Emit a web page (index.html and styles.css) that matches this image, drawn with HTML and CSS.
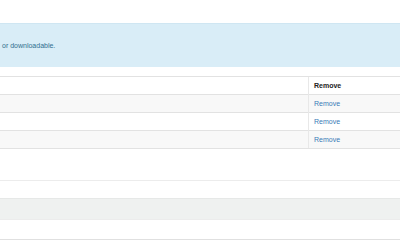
FILE: index.html
```html
<!DOCTYPE html>
<html>
<head>
<meta charset="utf-8">
<link rel="stylesheet" href="styles.css">
</head>
<body>
<div class="page">
  <div class="alert">or downloadable.</div>
  <table class="files">
    <thead>
      <tr><th class="name"></th><th class="act">Remove</th></tr>
    </thead>
    <tbody>
      <tr><td class="name"></td><td class="act"><a href="#">Remove</a></td></tr>
      <tr><td class="name"></td><td class="act"><a href="#">Remove</a></td></tr>
      <tr><td class="name"></td><td class="act"><a href="#">Remove</a></td></tr>
    </tbody>
  </table>
  <div class="list">
    <div class="row first"></div>
    <div class="row shaded"></div>
    <div class="row last"></div>
  </div>
</div>
</body>
</html>
```
FILE: styles.css
```css
html, body {
  margin: 0;
  padding: 0;
  background: #fff;
}
body {
  font-family: "Liberation Sans", Arial, sans-serif;
  font-size: 7px;
  color: #333;
}
.page {
  padding-top: 23px;
}
.alert {
  height: 43px;
  background: #d9edf7;
  border-top: 1px solid #cfe6f2;
  color: #31708f;
  padding-left: 2px;
  display: flex;
  align-items: center;
  line-height: 10px;
}
.files {
  margin-top: 9px;
  width: 100%;
  border-collapse: collapse;
  border-spacing: 0;
}
.files th, .files td {
  height: 17px;
  padding: 0 5px;
  border-top: 1px solid #e2e2e2;
  text-align: left;
  vertical-align: middle;
}
.files tbody tr:last-child td {
  border-bottom: 1px solid #e2e2e2;
}
.files th {
  font-weight: bold;
  color: #222;
}
.files .name {
  width: 298px;
}
.files .act {
  border-left: 1px solid #e8e8e8;
}
.files tbody tr:nth-child(odd) td {
  background: #f8f8f8;
}
.files a {
  color: #3a7ab7;
  text-decoration: none;
}
.list {
  margin-top: 31px;
}
.row {
  border-top: 1px solid #ececec;
}
.row.first {
  height: 17px;
}
.row.shaded {
  height: 20px;
  background: #eff1f0;
  border-top-color: #e6e8e7;
}
.row.last {
  height: 19px;
  border-bottom: 1px solid #e0e0e0;
}
```
